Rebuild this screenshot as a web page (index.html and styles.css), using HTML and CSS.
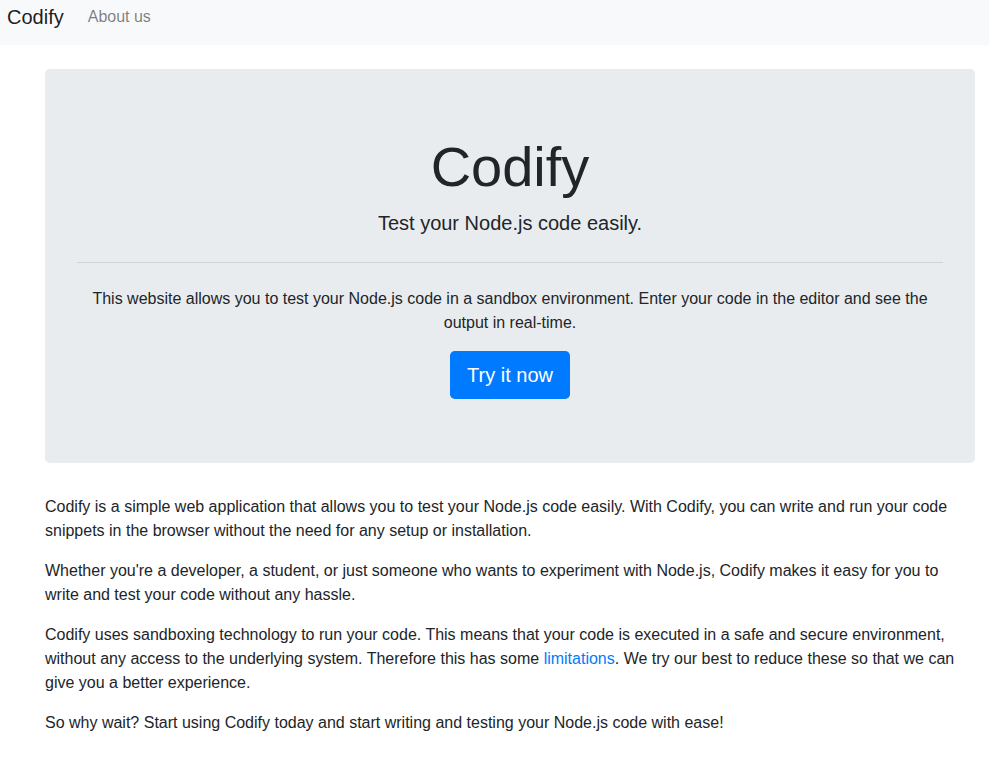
FILE: index.html
```html
<!DOCTYPE html>
<html lang="en">
<head>
<meta charset="utf-8">
<title>Codify</title>
<link rel="stylesheet" href="styles.css">
</head>
<body>
<nav class="navbar">
  <a class="brand" href="#">Codify</a>
  <a class="nav-link" href="#">About us</a>
</nav>
<main class="container">
  <section class="jumbotron">
    <h1 class="display">Codify</h1>
    <p class="lead">Test your Node.js code easily.</p>
    <hr class="divider">
    <p class="intro">This website allows you to test your Node.js code in a sandbox environment. Enter your code in the editor and see the output in real-time.</p>
    <div class="cta"><a class="btn" href="#">Try it now</a></div>
  </section>
  <p>Codify is a simple web application that allows you to test your Node.js code easily. With Codify, you can write and run your code snippets in the browser without the need for any setup or installation.</p>
  <p>Whether you're a developer, a student, or just someone who wants to experiment with Node.js, Codify makes it easy for you to write and test your code without any hassle.</p>
  <p>Codify uses sandboxing technology to run your code. This means that your code is executed in a safe and secure environment, without any access to the underlying system. Therefore this has some <a class="link" href="#">limitations</a>. We try our best to reduce these so that we can give you a better experience.</p>
  <p>So why wait? Start using Codify today and start writing and testing your Node.js code with ease!</p>
</main>
</body>
</html>
```
FILE: styles.css
```css
* { box-sizing: border-box; }
html, body { margin: 0; }
body {
  font-family: "Liberation Sans", Arial, sans-serif;
  font-size: 16px;
  line-height: 1.5;
  color: #212529;
  background: #fff;
}
a { text-decoration: none; }
.navbar {
  display: flex;
  align-items: flex-start;
  height: 45px;
  padding: 0 7px;
  background: #f8f9fa;
}
.brand {
  font-size: 20px;
  line-height: 30px;
  padding-top: 2px;
  margin-right: 16px;
  color: rgba(0,0,0,.9);
}
.nav-link {
  padding: 5px 8px;
  line-height: 24px;
  color: rgba(0,0,0,.5);
}
.container {
  padding: 24px 14px 0 45px;
}
.jumbotron {
  background: #e9ecef;
  border-radius: 4.8px;
  padding: 64px 32px;
  margin-bottom: 32px;
  text-align: center;
}
.display {
  font-size: 56px;
  font-weight: 300;
  line-height: 1.2;
  margin: 0 0 8px;
}
.lead {
  font-size: 20px;
  font-weight: 300;
  margin: 0 0 16px;
}
.divider {
  border: 0;
  border-top: 1px solid rgba(0,0,0,.1);
  margin: 24px 0;
  height: 0;
}
.intro { margin: 0 0 16px; }
.cta { display: flex; justify-content: center; }
.btn {
  display: inline-block;
  background: #007bff;
  color: #fff;
  font-size: 20px;
  line-height: 30px;
  padding: 9px 17px;
  border-radius: 4.8px;
}
.container > p { margin: 0 0 16px; }
.link { color: #007bff; }
```
